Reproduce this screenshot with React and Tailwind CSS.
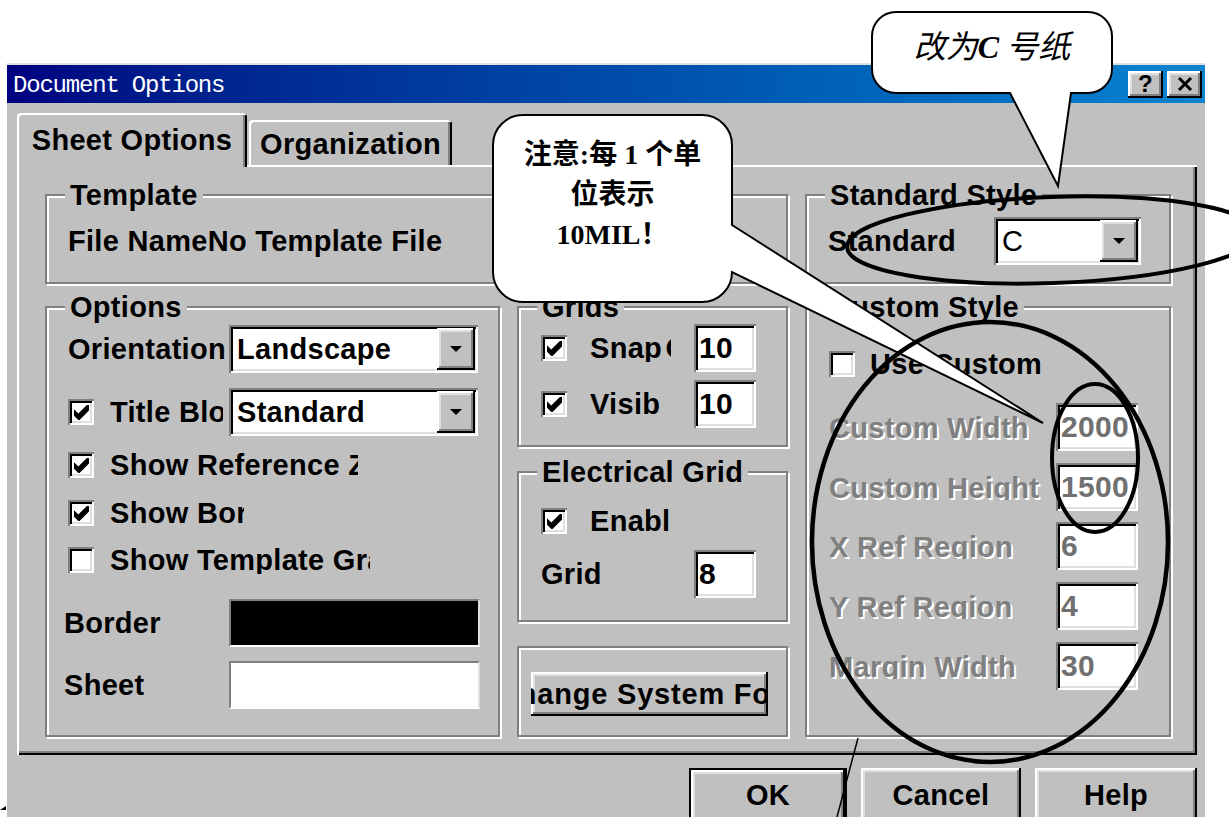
import React from 'react'

// Win95 style bevels, done with stacked inset shadows so they take no layout room
const raised = 'shadow-[inset_-2px_-2px_0_#000,inset_2px_2px_0_#fff,inset_-4px_-4px_0_#808080,inset_4px_4px_0_#dfdfdf]'
const sunken = 'shadow-[inset_2px_2px_0_#808080,inset_-2px_-2px_0_#fff,inset_4px_4px_0_#000,inset_-4px_-4px_0_#dfdfdf]'
const etched = 'border-2 border-[#808080] shadow-[inset_2px_2px_0_#fff,2px_2px_0_#fff]'

function Group({ title, className = '', children }) {
  return (
    <div className={`flex flex-col ${etched} ${className}`}>
      {title ? (
        <span className="self-start -mt-[15px] ml-[18px] px-[5px] h-[28px] leading-[28px] bg-[#c0c0c0] whitespace-nowrap">
          {title}
        </span>
      ) : null}
      {children}
    </div>
  )
}

function Check({ checked }) {
  return (
    <span className={`w-[26px] h-[26px] shrink-0 bg-white ${sunken} flex items-center justify-center`}>
      {checked && (
        <svg width="15" height="15" viewBox="0 0 7 7">
          <path d="M0 2L2 4L6 0H7V2.6L2.6 7H2L0 5Z" fill="#000" />
        </svg>
      )}
    </span>
  )
}

function Combo({ value, className = '' }) {
  return (
    <div className={`h-[48px] shrink-0 bg-white ${sunken} flex items-stretch p-[3px] ${className}`}>
      <span className="flex-1 pl-[5px] leading-[42px] whitespace-nowrap overflow-hidden">{value}</span>
      <span className={`w-[38px] bg-[#c0c0c0] ${raised} flex items-center justify-center`}>
        <svg width="12" height="6" viewBox="0 0 12 6">
          <path d="M0 0H12L6 6Z" fill="#000" />
        </svg>
      </span>
    </div>
  )
}

function Field({ value, dim, className = '' }) {
  return (
    <div
      className={`h-[48px] shrink-0 bg-white ${sunken} pl-[5px] pt-[4px] overflow-hidden whitespace-nowrap text-[30px] leading-[40px] ${
        dim ? 'text-[#707070]' : ''
      } ${className}`}
    >
      {value}
    </div>
  )
}

function Clip({ w, children }) {
  return <span className={`${w} block overflow-hidden whitespace-nowrap`}>{children}</span>
}

function DimRow({ label, value, mt }) {
  return (
    <div className={`${mt} flex items-center`}>
      <span className="w-[227px] h-[26px] overflow-hidden leading-[28px] whitespace-nowrap text-[#808080] [text-shadow:2px_2px_0_#fff]">
        {label}
      </span>
      <Field value={value} dim className="w-[82px]" />
    </div>
  )
}

function DlgButton({ label, wide, def }) {
  return (
    <div
      className={`${wide} h-[60px] bg-[#c0c0c0] ${raised} ${
        def ? 'border-2 border-black pt-[11px]' : 'pt-[13px]'
      } flex justify-center leading-[28px]`}
    >
      {label}
    </div>
  )
}

function TitleButton({ children }) {
  return (
    <div className={`w-[35px] h-[27px] bg-[#c0c0c0] ${raised} flex items-center justify-center`}>{children}</div>
  )
}

export default function App() {
  return (
    <div className="relative w-[1229px] h-[817px] overflow-hidden bg-white font-['Liberation_Sans',Arial,sans-serif] font-bold text-[29px] tracking-[0.3px] text-black">
      <div className="ml-[7px] mt-[63px] w-[1198px] h-[754px] bg-[#c0c0c0] border-t-2 border-[#dfdfdf] flex flex-col">
        {/* caption */}
        <div className="h-[38px] shrink-0 flex items-center justify-between pl-[6px] pr-[3px] bg-linear-to-r from-[#000080] to-[#1084d0]">
          <span className="pt-[3px] font-['Liberation_Mono',monospace] font-normal text-[24px] tracking-[-1.2px] leading-none text-white">
            Document Options
          </span>
          <div className="flex gap-[4px]">
            <TitleButton>
              <span className="text-[24px] leading-none">?</span>
            </TitleButton>
            <TitleButton>
              <svg width="16" height="14" viewBox="0 0 16 14">
                <path d="M2 1L14 13M14 1L2 13" stroke="#000" strokeWidth="3" />
              </svg>
            </TitleButton>
          </div>
        </div>

        <div className="pl-[10px] pt-[10px]">
          {/* tabs */}
          <div className="flex items-end h-[52px]">
            <div className="relative z-[1] w-[230px] h-[54px] -mb-[2px] bg-[#c0c0c0] rounded-t-[4px] shadow-[inset_2px_2px_0_#fff,inset_-2px_0_0_#000,inset_-4px_0_0_#808080] flex items-center justify-center leading-[28px]">
              Sheet Options
            </div>
            <div className="w-[203px] h-[45px] ml-[2px] bg-[#c0c0c0] rounded-t-[4px] shadow-[inset_2px_2px_0_#fff,inset_-2px_0_0_#000,inset_-4px_0_0_#808080] flex items-center justify-center pt-[2px] leading-[28px]">
              Organization
            </div>
          </div>

          {/* tab page */}
          <div className="w-[1180px] h-[590px] shadow-[inset_2px_2px_0_#fff,inset_-2px_-2px_0_#000,inset_-4px_-4px_0_#808080] pl-[28px] pt-[29px] grid grid-cols-[455px_271px_366px] grid-rows-[90px_431px] gap-x-[17px] gap-y-[22px]">
            <Group title="Template" className="col-span-2">
              <div className="mt-[18px] pl-[21px] leading-[28px] whitespace-nowrap">File NameNo Template File</div>
            </Group>

            <Group title="Standard Style">
              <div className="mt-[8px] pl-[21px] pr-[28px] flex items-center justify-between">
                <span className="leading-[28px]">Standard</span>
                <Combo value="C" className="w-[147px] font-normal" />
              </div>
            </Group>

            <Group title="Options">
              <div className="pl-[21px] flex flex-col leading-[28px]">
                <div className="mt-[4px] flex items-center">
                  <span className="w-[161px] shrink-0">Orientation</span>
                  <Combo value="Landscape" className="w-[249px]" />
                </div>
                <div className="mt-[15px] flex items-center">
                  <Check checked />
                  <span className="ml-[16px] mr-[6px] w-[113px] shrink-0 overflow-hidden whitespace-nowrap">Title Block</span>
                  <Combo value="Standard" className="w-[249px]" />
                </div>
                <div className="mt-[15px] h-[28px] flex items-center">
                  <Check checked />
                  <span className="ml-[16px]">
                    <Clip w="w-[248px]">Show Reference Zones</Clip>
                  </span>
                </div>
                <div className="mt-[20px] h-[28px] flex items-center">
                  <Check checked />
                  <span className="ml-[16px]">
                    <Clip w="w-[134px]">Show Border</Clip>
                  </span>
                </div>
                <div className="mt-[19px] h-[28px] flex items-center">
                  <Check />
                  <span className="ml-[16px]">
                    <Clip w="w-[260px]">Show Template Graphics</Clip>
                  </span>
                </div>
                <div className="mt-[25px] -ml-[4px] flex items-center">
                  <span className="w-[165px] shrink-0">Border</span>
                  <div className="w-[251px] h-[48px] bg-black border-2 border-t-[#808080] border-l-[#808080] border-r-[#dfdfdf] border-b-[#fff]" />
                </div>
                <div className="mt-[14px] -ml-[4px] flex items-center">
                  <span className="w-[165px] shrink-0">Sheet</span>
                  <div className="w-[251px] h-[48px] bg-white border-2 border-t-[#808080] border-l-[#808080] border-r-[#dfdfdf] border-b-[#fff]" />
                </div>
              </div>
            </Group>

            <div className="flex flex-col">
              <Group title="Grids" className="h-[141px]">
                <div className="pl-[22px] flex flex-col leading-[28px]">
                  <div className="mt-[3px] flex items-center">
                    <Check checked />
                    <span className="ml-[23px] [word-spacing:-5px]">
                      <Clip w="w-[81px]">Snap On</Clip>
                    </span>
                    <Field value="10" className="ml-[23px] w-[62px]" />
                  </div>
                  <div className="mt-[8px] flex items-center">
                    <Check checked />
                    <span className="ml-[23px]">
                      <Clip w="w-[70px]">Visible</Clip>
                    </span>
                    <Field value="10" className="ml-[34px] w-[62px]" />
                  </div>
                </div>
              </Group>

              <Group title="Electrical Grid" className="mt-[24px] h-[151px]">
                <div className="pl-[22px] flex flex-col leading-[28px]">
                  <div className="mt-[21px] h-[28px] flex items-center">
                    <Check checked />
                    <span className="ml-[23px]">
                      <Clip w="w-[79px]">Enable</Clip>
                    </span>
                  </div>
                  <div className="mt-[15px] flex items-center">
                    <span className="w-[153px] shrink-0">Grid</span>
                    <Field value="8" className="w-[62px]" />
                  </div>
                </div>
              </Group>

              <Group className="mt-[24px] h-[91px]">
                <div
                  className={`mt-[24px] ml-[12px] w-[237px] h-[44px] bg-[#c0c0c0] ${raised} overflow-hidden flex items-center leading-[28px]`}
                >
                  <span className="-ml-[34px] tracking-[0.8px] whitespace-nowrap">Change System Font</span>
                </div>
              </Group>
            </div>

            <Group title="Custom Style">
              <div className="pl-[22px] flex flex-col leading-[28px]">
                <div className="mt-[29px] h-[28px] flex items-center">
                  <Check />
                  <span className="ml-[15px] whitespace-nowrap">Use Custom</span>
                </div>
                <DimRow label="Custom Width" value="2000" mt="mt-[25px]" />
                <DimRow label="Custom Height" value="1500" mt="mt-[12px]" />
                <DimRow label="X Ref Region" value="6" mt="mt-[11px]" />
                <DimRow label="Y Ref Region" value="4" mt="mt-[12px]" />
                <DimRow label="Margin Width" value="30" mt="mt-[12px]" />
              </div>
            </Group>
          </div>

          {/* dialog buttons */}
          <div className="mt-[13px] w-[1180px] flex justify-end gap-[14px]">
            <DlgButton label="OK" wide="w-[158px]" def />
            <DlgButton label="Cancel" wide="w-[160px]" />
            <DlgButton label="Help" wide="w-[162px]" />
          </div>
        </div>
      </div>

      {/* annotation callouts and marks drawn over the dialog */}
      <svg className="absolute inset-0 pointer-events-none" width="1229" height="817" viewBox="0 0 1229 817">
        <path
          d="M896 12H1088A24 24 0 0 1 1112 36V69A24 24 0 0 1 1088 93H1071L1058 186L1010 93H896A24 24 0 0 1 872 69V36A24 24 0 0 1 896 12Z"
          fill="#fff"
          stroke="#000"
          strokeWidth="2"
        />
        <path
          d="M523 115H702A30 30 0 0 1 732 145V225L1043 423L732 272A30 30 0 0 1 702 302H523A30 30 0 0 1 493 272V145A30 30 0 0 1 523 115Z"
          fill="#fff"
          stroke="#000"
          strokeWidth="2"
        />
        <ellipse cx="1052" cy="240" rx="205" ry="43" fill="none" stroke="#000" strokeWidth="4" transform="rotate(-2 1052 240)" />
        <ellipse cx="990" cy="542" rx="178" ry="220" fill="none" stroke="#000" strokeWidth="4.5" />
        <ellipse cx="1095" cy="458" rx="43" ry="74" fill="none" stroke="#000" strokeWidth="4" />
        <path d="M858 738L837 817" stroke="#000" strokeWidth="1.5" />
        <path d="M0 810L6 806V810Z" fill="#000" />
      </svg>

      <div className="absolute left-[872px] top-[31px] w-[240px] text-center text-[32px] leading-[32px] font-normal italic tracking-normal font-['Liberation_Serif','Noto_Sans_CJK_SC',serif] whitespace-nowrap">
        改为<span className="font-bold mr-[7px]">C</span>号纸
      </div>
      <div className="absolute left-[493px] top-[135px] w-[239px] text-center text-[28px] leading-[40px] font-bold tracking-normal font-['Liberation_Serif','Noto_Sans_CJK_SC',serif]">
        注意:每 1 个单
        <br />
        位表示
        <br />
        10MIL！
      </div>
    </div>
  )
}
